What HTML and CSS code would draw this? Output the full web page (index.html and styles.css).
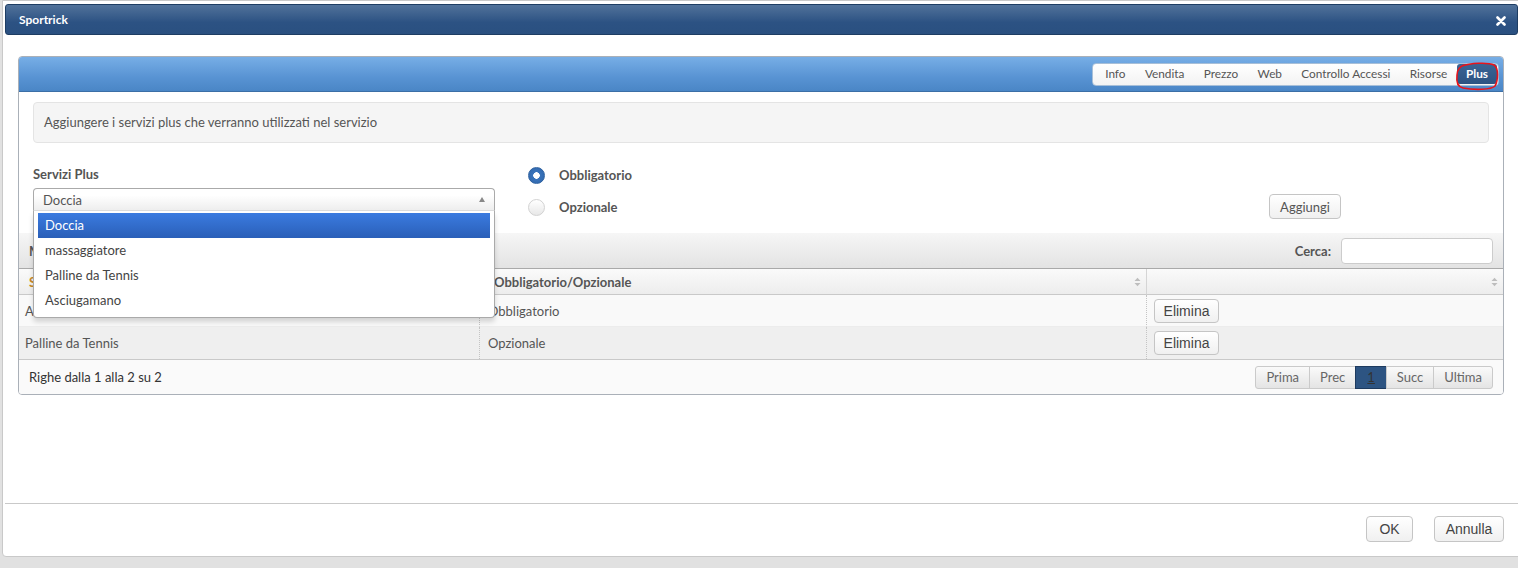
FILE: index.html
```html
<!DOCTYPE html>
<html lang="it">
<head>
<meta charset="utf-8">
<title>Sportrick</title>
<link rel="stylesheet" href="styles.css">
</head>
<body>
<div class="dialog">
  <div class="titlebar">
    <span class="title">Sportrick</span>
    <svg class="close" width="10" height="10" viewBox="0 0 10 10"><path d="M1.5 1.5 L8.5 8.5 M8.5 1.5 L1.5 8.5" stroke="#fff" stroke-width="2.6" stroke-linecap="round"/></svg>
  </div>
  <div class="content">
    <div class="panel">
      <div class="panel-head">
        <div class="tabs">
          <span class="tab">Info</span>
          <span class="tab">Vendita</span>
          <span class="tab">Prezzo</span>
          <span class="tab">Web</span>
          <span class="tab">Controllo Accessi</span>
          <span class="tab">Risorse</span>
          <span class="tab active">Plus</span>
        </div>
        <svg class="annot" width="46" height="30" viewBox="0 0 46 30"><path d="M8 5 C16 2 34 1 40 4 C45 7 44 20 41 25 C37 29 20 29 9 27 C4 26 2 22 3 14 C3 9 5 6 10 4" fill="none" stroke="#e8141b" stroke-width="1.6"/></svg>
      </div>
      <div class="panel-body">
        <div class="info">Aggiungere i servizi plus che verranno utilizzati nel servizio</div>
        <div class="form">
          <div class="field">
            <div class="label">Servizi Plus</div>
            <div class="select">
              <span>Doccia</span>
              <span class="arrow"></span>
            </div>
            <ul class="dropdown">
              <li class="sel">Doccia</li>
              <li>massaggiatore</li>
              <li>Palline da Tennis</li>
              <li>Asciugamano</li>
            </ul>
          </div>
          <div class="radios">
            <div class="radio-row"><span class="radio on"></span><span class="rlabel">Obbligatorio</span></div>
            <div class="radio-row"><span class="radio"></span><span class="rlabel">Opzionale</span></div>
          </div>
          <div class="add-col"><button class="btn add">Aggiungi</button></div>
        </div>
        <div class="table-wrap">
          <div class="toolbar">
            <span class="show">Mostra</span>
            <label class="search">Cerca: <span class="search-input"></span></label>
          </div>
          <div class="grid">
            <div class="th c1"><span class="sorted">Servizio</span><svg class="sort" width="7" height="10" viewBox="0 0 7 10"><path d="M0.5 4 L3.5 0.8 L6.5 4 Z M0.5 6 L6.5 6 L3.5 9.2 Z" fill="#bdbdbd"/></svg></div>
            <div class="th c2"><span>Obbligatorio/Opzionale</span><svg class="sort" width="7" height="10" viewBox="0 0 7 10"><path d="M0.5 4 L3.5 0.8 L6.5 4 Z M0.5 6 L6.5 6 L3.5 9.2 Z" fill="#bdbdbd"/></svg></div>
            <div class="th c3"><span></span><svg class="sort" width="7" height="10" viewBox="0 0 7 10"><path d="M0.5 4 L3.5 0.8 L6.5 4 Z M0.5 6 L6.5 6 L3.5 9.2 Z" fill="#bdbdbd"/></svg></div>

            <div class="td c1 odd">Asciugamano</div>
            <div class="td c2 odd">Obbligatorio</div>
            <div class="td c3 odd"><button class="btn del">Elimina</button></div>

            <div class="td c1 even">Palline da Tennis</div>
            <div class="td c2 even">Opzionale</div>
            <div class="td c3 even"><button class="btn del">Elimina</button></div>
          </div>
          <div class="tfoot">
            <span>Righe dalla 1 alla 2 su 2</span>
            <div class="pager">
              <span class="pg">Prima</span><span class="pg">Prec</span><span class="pg cur">1</span><span class="pg">Succ</span><span class="pg">Ultima</span>
            </div>
          </div>
        </div>
      </div>
    </div>
  </div>
  <div class="footer">
    <button class="btn foot ok">OK</button>
    <button class="btn foot cancel">Annulla</button>
  </div>
</div>
</body>
</html>
```
FILE: styles.css
```css
* { box-sizing: border-box; }
html, body { margin: 0; padding: 0; }
body {
  background: #e1e1e1;
  width: 1518px;
  height: 568px;
  overflow: hidden;
  font-family: Lato, "Open Sans", sans-serif;
  font-size: 13px;
  color: #555;
}
.dialog {
  margin-left: 2px;
  width: 1520px;
  height: 557px;
  background: #fff;
  border: 1px solid #c9c9c9;
  border-radius: 0 0 0 4px;
  padding: 3px 2px 0 2px;
  display: flex;
  flex-direction: column;
}
.titlebar {
  height: 31px;
  flex: none;
  background: linear-gradient(#51729a, #2c5283 60%, #2a5080);
  border: 1px solid #1e3d63;
  border-radius: 3px;
  display: flex;
  align-items: center;
  justify-content: space-between;
  padding: 0 11px 0 13px;
  margin-right: 1px;
}
.title { color: #fff; font-weight: bold; font-size: 12px; }
.close { margin-top: 2px; }
.content {
  flex: 1;
  padding: 21px 15px 0 13px;
}
.panel {
  border: 1px solid #aab0b8;
  border-radius: 4px;
  overflow: hidden;
}
.panel-head {
  position: relative;
  height: 35px;
  background: linear-gradient(#77aee6, #5893d3 60%, #4a86c6);
  border-bottom: 1px solid #3c6fa6;
  display: flex;
  justify-content: flex-end;
  align-items: center;
  padding-right: 4px;
}
.tabs {
  display: flex;
  align-items: center;
  height: 23px;
  background: linear-gradient(#fff, #f3f3f3);
  border: 1px solid #a7bfd8;
  border-radius: 4px;
  padding: 0 1px;
  font-size: 11.8px;
}
.tab { padding: 0 9.7px; line-height: 20px; color: #555; }
.tab:first-child { padding-left: 11px; }
.tab.active {
  background: linear-gradient(#3a6495, #2c5382);
  color: #fff;
  font-weight: bold;
  border-radius: 3px;
  padding: 0 9px;
}
.annot { position: absolute; right: 3px; top: 4px; }
.info {
  margin: 10px 14px 0 14px;
  height: 41px;
  background: #f5f5f5;
  border: 1px solid #e4e4e4;
  border-radius: 4px;
  padding: 0 10px;
  line-height: 38px;
}
.form {
  display: grid;
  grid-template-columns: 462px 1fr auto;
  height: 90px;
  padding: 0 14px;
}
.field { position: relative; padding-top: 23px; }
.label { font-weight: bold; line-height: 16px; margin-bottom: 6px; }
.select {
  height: 23px;
  border: 1px solid #aaa;
  border-bottom-color: #ddd;
  border-radius: 4px 4px 0 0;
  background: linear-gradient(#fff 30%, #eee);
  display: flex;
  align-items: center;
  justify-content: space-between;
  padding: 0 8px 0 9px;
}
.arrow {
  width: 0; height: 0;
  border-left: 3.5px solid transparent;
  border-right: 3.5px solid transparent;
  border-bottom: 5px solid #888;
  margin-right: 1px;
}
.dropdown {
  position: absolute;
  left: 0; top: 68px;
  width: 462px;
  margin: 0;
  padding: 2px 4px 4px 4px;
  list-style: none;
  background: #fff;
  border: 1px solid #aaa;
  border-top: 0;
  border-radius: 0 0 4px 4px;
  box-shadow: 0 4px 5px rgba(0,0,0,0.15);
  z-index: 5;
}
.dropdown li { height: 25px; line-height: 25px; padding-left: 7px; color: #444; }
.dropdown li.sel {
  background: linear-gradient(#3b7be0, #2a5fb8);
  color: #fff;
}
.radios { padding-left: 33px; padding-top: 24px; }
.radio-row { display: flex; align-items: center; height: 32px; margin-top: -8px; }
.radio-row + .radio-row { margin-top: 0; }
.radio {
  width: 17px; height: 17px;
  border-radius: 50%;
  border: 1px solid #d2d2d2;
  background: linear-gradient(#fff, #e8e8e8);
  margin-right: 14px;
  flex: none;
}
.radio.on {
  border: 1px solid #2f62a0;
  background: radial-gradient(circle, #fff 0 3px, #3a74bb 3.5px, #2e65aa);
}
.rlabel { font-weight: bold; }
.add-col { padding-right: 148px; padding-top: 51px; }
.btn {
  font-family: "Liberation Sans", Arial, sans-serif;
  font-size: 13px;
  color: #444;
  background: linear-gradient(#fff, #f0f0f0);
  border: 1px solid #c5c5c5;
  border-radius: 4px;
  cursor: pointer;
}
.add { height: 25px; width: 72px; font-family: Lato, sans-serif; font-size: 13px; color: #555; }
.toolbar {
  height: 36px;
  background: linear-gradient(#f6f6f6, #e3e3e3);
  border-bottom: 1px solid #a9a9a9;
  display: flex;
  justify-content: space-between;
  align-items: center;
  padding: 0 10px;
  font-weight: bold;
}
.search { display: flex; align-items: center; gap: 10px; }
.search-input {
  width: 152px; height: 26px;
  background: #fff;
  border: 1px solid #ccc;
  border-radius: 4px;
}
.grid {
  display: grid;
  grid-template-columns: 461px 667px 1fr;
}
.th {
  height: 26px;
  background: linear-gradient(#fafafa, #ededed);
  border-bottom: 1px solid #c9c9c9;
  display: flex;
  align-items: center;
  justify-content: space-between;
  font-weight: bold;
  padding: 0 5px 0 14px;
}
.th.c1 { padding-left: 10px; border-right: 1px solid #d5d5d5; }
.th.c2 { border-right: 1px solid #d5d5d5; }
.sorted { color: #c98a2a; }
.sort { flex: none; }
.td {
  height: 32px;
  display: flex;
  align-items: center;
  padding-left: 8px;
}
.td.c1 { padding-left: 6px; border-right: 1px dotted #c4c4c4; }
.td.c2 { border-right: 1px dotted #c4c4c4; }
.td.c3 { padding-left: 7px; }
.td.odd { background: #f9f9f9; border-bottom: 1px solid #ececec; }
.td.even { background: #efefef; }
.del { height: 24px; width: 65px; font-size: 14px; }
.tfoot {
  height: 35px;
  border-top: 1px solid #c9c9c9;
  background: #fafafa;
  display: flex;
  align-items: center;
  justify-content: space-between;
  padding: 0 10px;
  color: #333;
}
.pager { display: flex; }
.pg {
  height: 23px;
  line-height: 21px;
  padding: 0 10px;
  border: 1px solid #cacaca;
  background: linear-gradient(#fafafa, #e4e4e4);
  color: #666;
  margin-left: -1px;
}
.pg:first-child { border-radius: 3px 0 0 3px; }
.pg:last-child { border-radius: 0 3px 3px 0; }
.pg.cur {
  background: #2d5482;
  border-color: #1d3a5e;
  color: #333;
  text-decoration: underline;
  padding: 0 11px;
}
.footer {
  flex: none;
  height: 53px;
  border-top: 1px solid #c9c9c9;
  display: flex;
  justify-content: flex-end;
  align-items: flex-start;
  gap: 21px;
  padding: 12px 17px 0 0;
  margin-right: -2px;
}
.foot { height: 26px; font-size: 14px; padding: 0; }
.ok { width: 47px; }
.cancel { width: 70px; }
```
